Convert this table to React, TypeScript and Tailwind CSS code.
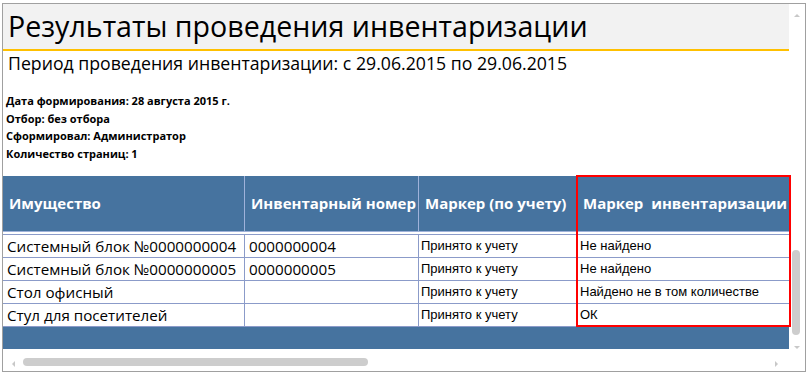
import React from "react";

const rows = [
  ["Системный блок №0000000004", "0000000004", "Принято к учету", "Не найдено"],
  ["Системный блок №0000000005", "0000000005", "Принято к учету", "Не найдено"],
  ["Стол офисный", "", "Принято к учету", "Найдено не в том количестве"],
  ["Стул для посетителей", "", "Принято к учету", "ОК"],
];

const seg = { fontFamily: '"Open Sans", "Noto Sans", sans-serif' };
const arial = { fontFamily: '"Liberation Sans", Arial, sans-serif' };

export default function App() {
  return (
    <div className="w-[808px] h-[376px] bg-white overflow-hidden">
      <div className="ml-[2px] mt-[3px] w-[804px] h-[369px] border border-[#a0a0a0] flex">
        <div className="w-[786px] flex flex-col">
          <div className="h-[45px] bg-[#f2f2f2] flex items-center pl-[5px]">
            <span className="text-[28.6px] text-black leading-none" style={seg}>
              Результаты проведения инвентаризации
            </span>
          </div>
          <div className="h-[2px] bg-[#ffc000]" />
          <div className="h-[24px] flex items-center pl-[5px] mt-[1px]">
            <span className="text-[17.7px] text-black leading-none" style={seg}>
              Период проведения инвентаризации: с 29.06.2015 по 29.06.2015
            </span>
          </div>
          <div className="pl-[3px] pt-[16px] flex flex-col text-[11px] font-bold text-black leading-[17.5px]" style={seg}>
            <span>Дата формирования: 28 августа 2015 г.</span>
            <span>Отбор: без отбора</span>
            <span>Сформировал: Администратор</span>
            <span>Количество страниц: 1</span>
          </div>
          <div className="relative mt-[14px]">
            <div className="flex h-[56px] bg-[#46739f] border-b border-[#9fb2da]">
              {["Имущество", "Инвентарный номер", "Маркер (по учету)", "Маркер  инвентаризации"].map((h, i) => (
                <div
                  key={i}
                  className={`${["w-[242px]", "w-[174px]", "w-[158px]", "w-[212px]"][i]} flex items-center pl-[6px] text-white font-bold text-[15px] whitespace-pre ${i < 3 ? "border-r border-[#9fb2da]" : ""}`}
                  style={seg}
                >
                  {h}
                </div>
              ))}
            </div>
            <div className="h-[2px] bg-white" />
            {rows.map((r, ri) => (
              <div key={ri} className="flex h-[23px] border-t border-[#8b9bc9]">
                <div className="w-[242px] border-r border-[#8b9bc9] flex items-center pl-[4px] text-[15.2px] text-black whitespace-nowrap" style={seg}>
                  {r[0]}
                </div>
                <div className="w-[174px] border-r border-[#8b9bc9] flex items-center pl-[4px] text-[15.2px] text-black" style={seg}>
                  {r[1]}
                </div>
                <div className="w-[158px] border-r border-[#8b9bc9] flex items-start pt-[1px] pl-[2px] text-[13px] text-black" style={arial}>
                  {r[2]}
                </div>
                <div className="w-[212px] flex items-start pt-[1px] pl-[3px] text-[13px] text-black whitespace-nowrap" style={arial}>
                  {r[3]}
                </div>
              </div>
            ))}
            <div className="h-[23px] bg-[#46739f] border-t border-[#8b9bc9]" />
            <div className="absolute left-[573px] top-[-1px] w-[215px] h-[152px] border-2 border-[#ff0000] pointer-events-none" />
          </div>
          <div className="flex-1 relative">
            <div className="absolute left-[9px] top-[12px] w-0 h-0 border-y-[3px] border-y-transparent border-r-[3px] border-r-[#c8c8c8]" />
            <div className="absolute left-[20px] top-[9px] w-[345px] h-[8px] rounded-[4px] bg-[#cdcdcd]" />
            <div className="absolute left-[772px] top-[12px] w-0 h-0 border-y-[3px] border-y-transparent border-l-[3px] border-l-[#c8c8c8]" />
          </div>
        </div>
        <div className="flex-1 relative">
          <div className="absolute left-[5px] top-[10px] w-0 h-0 border-x-[3px] border-x-transparent border-b-[3px] border-b-[#c8c8c8]" />
          <div className="absolute left-[3px] top-[246px] w-[8px] h-[85px] rounded-[4px] bg-[#cdcdcd]" />
          <div className="absolute left-[5px] top-[342px] w-0 h-0 border-x-[3px] border-x-transparent border-t-[3px] border-t-[#c8c8c8]" />
        </div>
      </div>
    </div>
  );
}
